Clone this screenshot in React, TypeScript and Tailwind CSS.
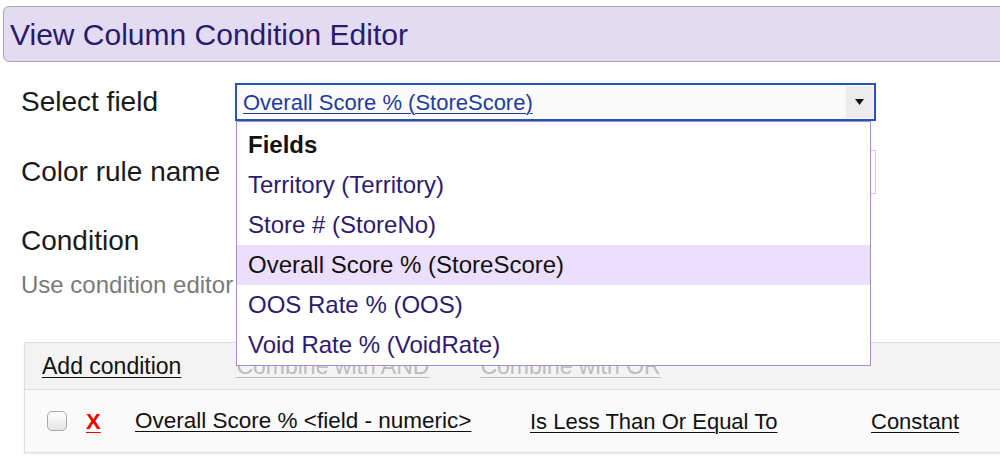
import React from "react";

const fields = [
  { label: "Territory (Territory)" },
  { label: "Store # (StoreNo)" },
  { label: "Overall Score % (StoreScore)", active: true },
  { label: "OOS Rate % (OOS)" },
  { label: "Void Rate % (VoidRate)" },
];

function FieldSelect() {
  return (
    <div className="relative w-[641px] h-[38px]">
      <div className="flex h-full items-center border-2 border-[#2852b5] bg-[#fbfbfb]">
        <span className="flex-1 pl-[6px] text-[22px] text-[#1d3c9d] underline underline-offset-[3px] decoration-1">
          Overall Score % (StoreScore)
        </span>
        <div className="mr-[1px] flex h-[32px] w-[27px] items-center justify-center bg-[#ececec]">
          <svg width="9" height="6" viewBox="0 0 9 6">
            <path d="M0 0 H9 L4.5 6 Z" fill="#111" />
          </svg>
        </div>
      </div>
      {/* open list */}
      <div className="absolute left-[1px] top-[38px] z-10 w-[635px] border border-[#a68bd9] bg-white pt-[3px]">
        <div className="flex h-[40px] items-center pl-[11px] text-[24px] font-bold text-[#111]">
          Fields
        </div>
        {fields.map((f, i) => (
          <div
            key={i}
            className={`flex h-[40px] items-center pl-[11px] text-[24px] ${
              f.active ? "bg-[#ecdffd] text-[#111]" : "text-[#2e1a6f]"
            }`}
          >
            {f.label}
          </div>
        ))}
      </div>
    </div>
  );
}

export default function App() {
  return (
    <div className="relative h-[476px] w-[1000px] overflow-hidden bg-white font-['Liberation_Sans',Arial,sans-serif]">
      <div className="ml-[3px] mt-[6px] flex h-[56px] w-[1010px] items-center rounded-l-[6px] border border-[#a8a8a8] bg-[#e2dbf2] pl-[6px] text-[30px] text-[#2b1b6c]">
        View Column Condition Editor
      </div>

      <div className="pl-[21px]">
        <div className="mt-[21px] flex h-[38px] items-center">
          <span className="w-[214px] text-[28px] text-[#1a1a1a]">Select field</span>
          <FieldSelect />
        </div>

        <div className="mt-[29px] flex h-[44px] items-center">
          <span className="w-[215px] text-[28px] text-[#1a1a1a]">Color rule name</span>
          <div className="h-[44px] w-[640px] border border-[#cfcfcf] bg-white" />
        </div>

        <div className="mt-[30px] h-[34px] text-[28px] leading-[34px] text-[#1a1a1a]">Condition</div>
        <div className="mt-[12px] h-[30px] text-[24px] leading-[30px] text-[#7a7a7a]">
          Use condition editor below.
        </div>

        <div className="ml-[3px] mt-[42px] w-[1000px] border border-[#dedede] shadow-[0_1px_2px_rgba(0,0,0,0.08)]">
          <div className="flex h-[47px] items-center border-b border-[#dedede] bg-[#f3f3f3] pl-[17px] text-[23px]">
            <span className="text-[#111] underline underline-offset-[3px] decoration-1">Add condition</span>
            <span className="ml-[55px] text-[#bdbdbd] underline underline-offset-[3px] decoration-1">Combine with AND</span>
            <span className="ml-[51px] text-[#bdbdbd] underline underline-offset-[3px] decoration-1">Combine with OR</span>
          </div>
          <div className="flex h-[62px] items-center bg-[#fafafa] text-[22px] text-[#111]">
            <span className="ml-[22px] h-[20px] w-[20px] rounded-[5px] border border-[#a9a9a9] bg-gradient-to-b from-white to-[#e4e4e4]" />
            <span className="ml-[19px] w-[49px] text-[22px] font-bold text-[#f00000] underline underline-offset-[3px] decoration-1">
              X
            </span>
            <span className="w-[395px] text-[22.5px]">
              <span className="underline underline-offset-[3px] decoration-1">Overall Score % &lt;field - numeric&gt;</span>
            </span>
            <span className="w-[341px]">
              <span className="underline underline-offset-[3px] decoration-1">Is Less Than Or Equal To</span>
            </span>
            <span className="underline underline-offset-[3px] decoration-1">Constant</span>
          </div>
        </div>
      </div>
    </div>
  );
}
